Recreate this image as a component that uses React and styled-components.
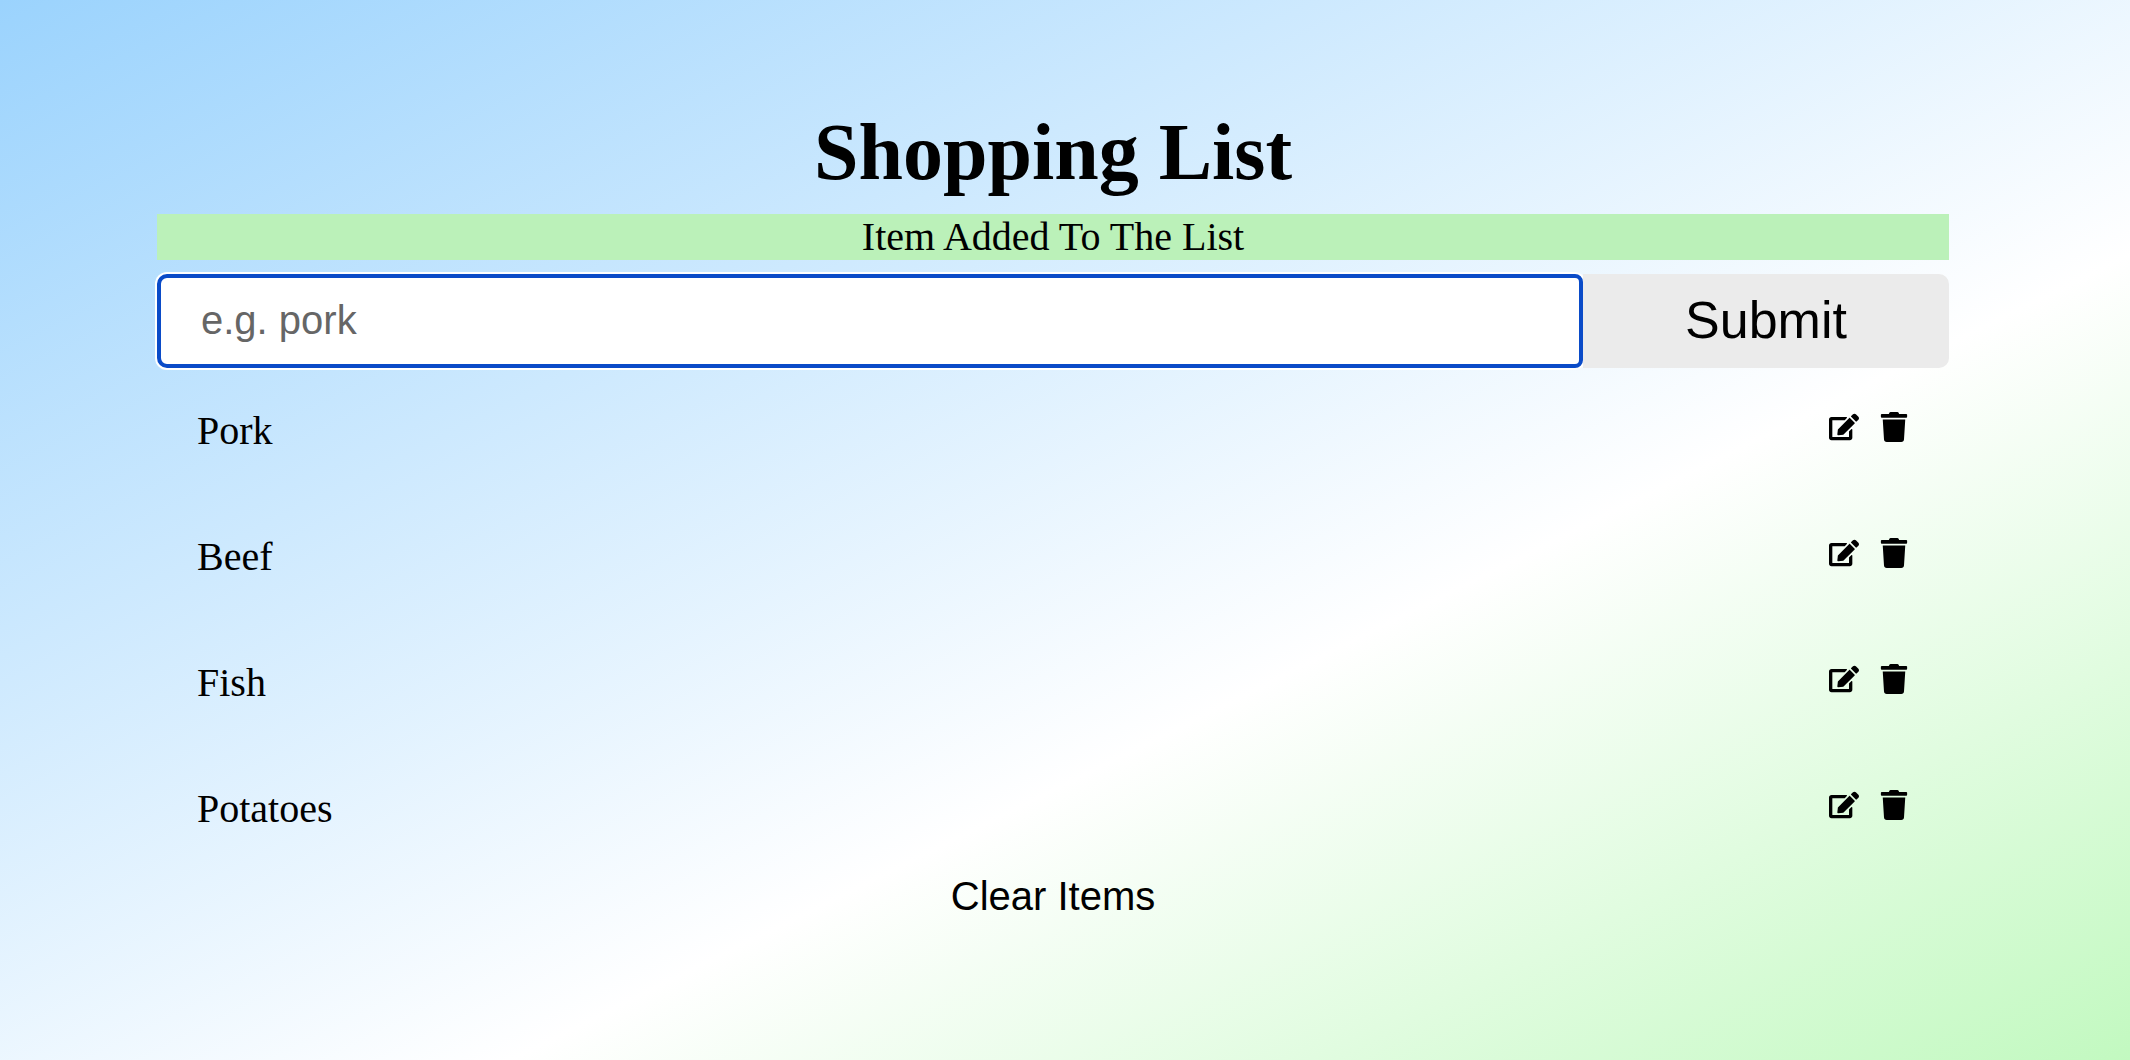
import React, { useState } from 'react';
import styled, { createGlobalStyle } from 'styled-components';
import { FaEdit, FaTrash } from 'react-icons/fa';

const GlobalStyle = createGlobalStyle`
  * {
    box-sizing: border-box;
  }
  body {
    margin: 0;
    color: #000;
    font-family: 'Liberation Serif', 'Times New Roman', serif;
    font-size: 40px;
    line-height: 46px;
  }
`;

const Page = styled.main`
  min-height: 100vh;
  padding: 106px 181px 106px 157px;
  background: linear-gradient(to bottom right, #9bd3fd 0%, #ffffff 62%, #c2f9c0 100%);
`;

const Title = styled.h1`
  margin: 0 0 16px;
  font-size: 80px;
  line-height: 92px;
  text-align: center;
`;

const Alert = styled.p`
  margin: 0 0 14px;
  background: #bbf1b9;
  text-align: center;
`;

const Form = styled.form`
  display: flex;
  height: 94px;
`;

const ItemInput = styled.input`
  flex: 1;
  min-width: 0;
  padding: 0 40px 2px;
  border: 4px solid #0a4bc8;
  border-radius: 10px 8px 8px 10px;
  outline: none;
  box-shadow: 0 0 0 2px #fff;
  background: #fff;
  color: #000;
  font-family: 'Liberation Sans', Arial, sans-serif;
  font-size: 40px;

  &::placeholder {
    color: #666;
    opacity: 1;
  }
`;

const SubmitButton = styled.button`
  flex: 0 0 366px;
  padding: 0 0 2px;
  border: 0;
  border-radius: 0 10px 10px 0;
  background: #ebebeb;
  color: #000;
  font-family: 'Liberation Sans', Arial, sans-serif;
  font-size: 52px;
  cursor: pointer;
`;

const List = styled.ul`
  margin: 0;
  padding: 0;
  list-style: none;
`;

const Row = styled.li`
  display: flex;
  justify-content: space-between;
  padding: 40px;
`;

const Actions = styled.div`
  display: flex;
  align-items: flex-start;
  gap: 20px;
  padding-top: 4px;
`;

const IconButton = styled.button`
  display: flex;
  padding: 0;
  border: 0;
  background: transparent;
  color: #000;
  font-size: 30px;
  cursor: pointer;
`;

const ClearButton = styled.button`
  display: block;
  margin: 0 auto;
  padding: 1px 12px;
  border: 0;
  background: transparent;
  color: #000;
  font-family: 'Liberation Sans', Arial, sans-serif;
  font-size: 40px;
  line-height: 46px;
  cursor: pointer;
`;

export default function App() {
  const [items, setItems] = useState(['Pork', 'Beef', 'Fish', 'Potatoes']);
  const [text, setText] = useState('');

  const submit = (event) => {
    event.preventDefault();
    if (!text.trim()) return;
    setItems([...items, text.trim()]);
    setText('');
  };

  const remove = (index) => setItems(items.filter((_, i) => i !== index));

  const edit = (index) => {
    setText(items[index]);
    remove(index);
  };

  return (
    <>
      <GlobalStyle />
      <Page>
        <Title>Shopping List</Title>
        <Alert role="status">Item Added To The List</Alert>
        <Form onSubmit={submit}>
          <ItemInput
            type="text"
            aria-label="Item"
            placeholder="e.g. pork"
            value={text}
            onChange={(event) => setText(event.target.value)}
          />
          <SubmitButton type="submit">Submit</SubmitButton>
        </Form>
        <List>
          {items.map((item, index) => (
            <Row key={item}>
              <span>{item}</span>
              <Actions>
                <IconButton type="button" aria-label={`Edit ${item}`} onClick={() => edit(index)}>
                  <FaEdit />
                </IconButton>
                <IconButton type="button" aria-label={`Delete ${item}`} onClick={() => remove(index)}>
                  <FaTrash />
                </IconButton>
              </Actions>
            </Row>
          ))}
        </List>
        <ClearButton type="button" onClick={() => setItems([])}>
          Clear Items
        </ClearButton>
      </Page>
    </>
  );
}
